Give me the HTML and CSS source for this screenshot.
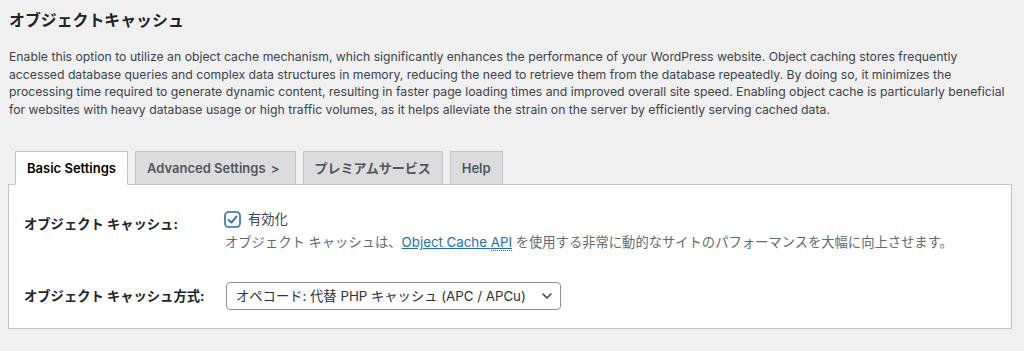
FILE: index.html
```html
<!DOCTYPE html>
<html lang="ja">
<head>
<meta charset="utf-8">
<title>オブジェクトキャッシュ</title>
<link rel="stylesheet" href="styles.css">
</head>
<body>
<div class="wrap">
  <h1 class="title">オブジェクトキャッシュ</h1>
  <p class="intro">Enable this option to utilize an object cache mechanism, which significantly enhances the performance of your WordPress website. Object caching stores frequently accessed database queries and complex data structures in memory, reducing the need to retrieve them from the database repeatedly. By doing so, it minimizes the processing time required to generate dynamic content, resulting in faster page loading times and improved overall site speed. Enabling object cache is particularly beneficial for websites with heavy database usage or high traffic volumes, as it helps alleviate the strain on the server by efficiently serving cached data.</p>

  <nav class="tabs">
    <a class="tab tab-active">Basic Settings</a>
    <a class="tab tab-more">Advanced Settings <span class="tab-chevron">&gt;</span></a>
    <a class="tab">プレミアムサービス</a>
    <a class="tab">Help</a>
  </nav>

  <div class="panel">
    <div class="row row-first">
      <div class="row-label label-first">オブジェクト キャッシュ:</div>
      <div class="row-field">
        <label class="check">
          <span class="check-box">
            <svg width="17" height="17" viewBox="0 0 17 17">
              <rect x="1" y="1" width="15" height="15" rx="3.5" fill="#fff" stroke="#2271b1" stroke-width="1.6"/>
              <path d="M4.6 8.8 L7.4 11.6 L12.6 5.4" fill="none" stroke="#2271b1" stroke-width="1.8" stroke-linecap="round" stroke-linejoin="round"/>
            </svg>
          </span>
          <span class="check-text">有効化</span>
        </label>
        <p class="desc">オブジェクト キャッシュは、<a class="link">Object Cache <abbr class="abbr">API</abbr></a> を使用する非常に動的なサイトのパフォーマンスを大幅に向上させます。</p>
      </div>
    </div>
    <div class="row row-second">
      <div class="row-label">オブジェクト キャッシュ方式:</div>
      <div class="row-field">
        <div class="select-wrap">
          <select class="select">
            <option>オペコード: 代替 PHP キャッシュ (APC / APCu)</option>
          </select>
          <svg class="select-arrow" width="12" height="8" viewBox="0 0 12 8">
            <path d="M2 2 L6 6 L10 2" fill="none" stroke="#3c434a" stroke-width="1.6" stroke-linecap="round" stroke-linejoin="round"/>
          </svg>
        </div>
      </div>
    </div>
  </div>
</div>
</body>
</html>
```

FILE: styles.css
```css
html, body {
  margin: 0;
  padding: 0;
  background: #f0f0f1;
}
body {
  font-family: "Inter", "Noto Sans CJK JP", sans-serif;
  color: #3c434a;
  font-size: 13px;
}
.wrap {
  width: 1004px;
  padding-left: 8px;
}
.title {
  margin: 0;
  padding: 8px 0 0 1px;
  font-size: 15.9px;
  line-height: 24px;
  font-weight: 700;
  color: #1d2327;
  font-family: "Noto Sans CJK JP", sans-serif;
}
.intro {
  margin: 16px 0 0 1px;
  font-size: 12.22px;
  line-height: 17.7px;
  color: #3c434a;
}
.tabs {
  display: flex;
  gap: 7px;
  padding-left: 7px;
  margin-top: 32px;
}
.tab {
  display: block;
  height: 34px;
  box-sizing: border-box;
  padding: 0 11px;
  line-height: 32px;
  font-size: 13px;
  font-weight: 600;
  color: #50575e;
  background: #dcdcde;
  border: 1px solid #c3c4c7;
  margin-bottom: -1px;
  position: relative;
}
.tab-more {
  padding-right: 15px;
}
.tab-chevron {
  margin-left: 2px;
}
.tab-active {
  background: #fff;
  color: #000;
  border-bottom-color: #fff;
  z-index: 1;
}
.panel {
  background: #fff;
  border: 1px solid #c3c4c7;
  padding: 26px 15px 18px 15px;
}
.row {
  display: flex;
}
.row-label {
  width: 200px;
  flex: none;
  font-weight: 700;
  font-size: 13.3px;
  line-height: 17px;
  color: #1d2327;
}
.label-first {
  margin-top: 5.5px;
}
.row-second {
  margin-top: 31px;
  align-items: center;
}
.check {
  display: flex;
  align-items: center;
  gap: 7px;
  height: 17px;
}
.check-box {
  display: block;
  width: 17px;
  height: 17px;
}
.check-box svg {
  display: block;
}
.check-text {
  font-size: 13.3px;
  line-height: 17px;
  color: #3c434a;
}
.desc {
  margin: 6.5px 0 0 1px;
  font-size: 13.3px;
  line-height: 17px;
  color: #646970;
}
.link {
  color: #2271b1;
  text-decoration: underline;
}
.abbr {
  text-decoration: none;
  border-bottom: 1px dotted #2271b1;
}
.select-wrap {
  position: relative;
  margin-left: 2px;
  width: 335px;
}
.select {
  appearance: none;
  -webkit-appearance: none;
  display: block;
  width: 335px;
  height: 28px;
  box-sizing: border-box;
  border: 1px solid #8c8f94;
  border-radius: 4px;
  background: #fff;
  padding: 0 24px 0 9px;
  font-family: "Inter", "Noto Sans CJK JP", sans-serif;
  font-size: 13.3px;
  color: #2c3338;
}
.select-arrow {
  position: absolute;
  right: 8px;
  top: 10px;
}
```
